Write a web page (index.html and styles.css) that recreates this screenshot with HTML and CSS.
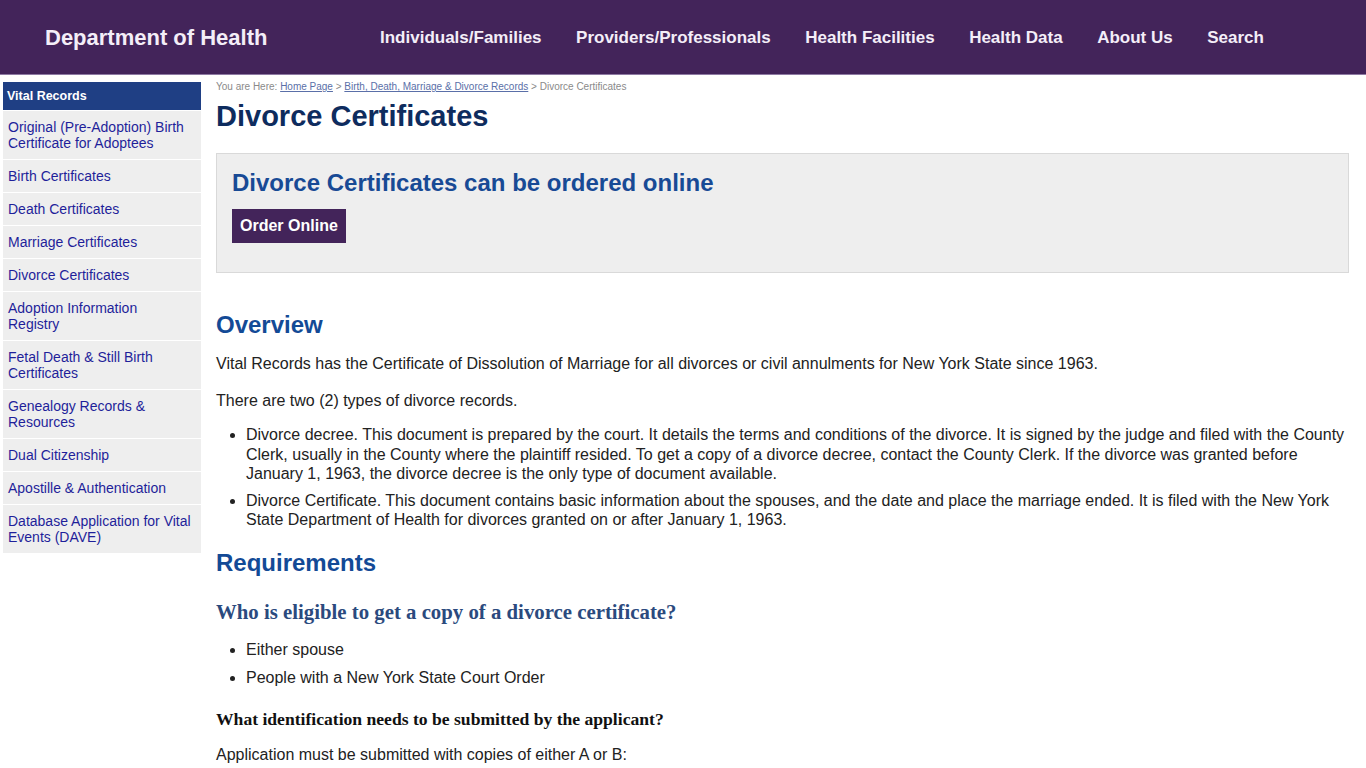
FILE: index.html
```html
<!DOCTYPE html>
<html lang="en">
<head>
<meta charset="utf-8">
<title>Divorce Certificates</title>
<link rel="stylesheet" href="styles.css">
</head>
<body>
<header class="topbar">
  <div class="brand">Department of Health</div>
  <nav class="mainnav">
    <a href="#">Individuals/Families</a>
    <a href="#">Providers/Professionals</a>
    <a href="#">Health Facilities</a>
    <a href="#">Health Data</a>
    <a href="#">About Us</a>
    <a href="#">Search</a>
  </nav>
</header>
<div class="page">
  <aside class="sidebar">
    <div class="side-head">Vital Records</div>
    <ul class="side-list">
      <li><a href="#">Original (Pre-Adoption) Birth Certificate for Adoptees</a></li>
      <li><a href="#">Birth Certificates</a></li>
      <li><a href="#">Death Certificates</a></li>
      <li><a href="#">Marriage Certificates</a></li>
      <li><a href="#">Divorce Certificates</a></li>
      <li><a href="#">Adoption Information Registry</a></li>
      <li><a href="#">Fetal Death &amp; Still Birth Certificates</a></li>
      <li><a href="#">Genealogy Records &amp; Resources</a></li>
      <li><a href="#">Dual Citizenship</a></li>
      <li><a href="#">Apostille &amp; Authentication</a></li>
      <li><a href="#">Database Application for Vital Events (DAVE)</a></li>
    </ul>
  </aside>
  <main class="content">
    <div class="crumbs">You are Here: <a href="#">Home Page</a> &gt; <a href="#">Birth, Death, Marriage &amp; Divorce Records</a> &gt; Divorce Certificates</div>
    <h1 class="title">Divorce Certificates</h1>
    <div class="callout">
      <h2 class="callout-head">Divorce Certificates can be ordered online</h2>
      <a class="btn" href="#">Order Online</a>
    </div>
    <h2 class="sec sec-first">Overview</h2>
    <p>Vital Records has the Certificate of Dissolution of Marriage for all divorces or civil annulments for New York State since 1963.</p>
    <p>There are two (2) types of divorce records.</p>
    <ul class="bul">
      <li>Divorce decree. This document is prepared by the court. It details the terms and conditions of the divorce. It is signed by the judge and filed with the County Clerk, usually in the County where the plaintiff resided. To get a copy of a divorce decree, contact the County Clerk. If the divorce was granted before January 1, 1963, the divorce decree is the only type of document available.</li>
      <li>Divorce Certificate. This document contains basic information about the spouses, and the date and place the marriage ended. It is filed with the New York State Department of Health for divorces granted on or after January 1, 1963.</li>
    </ul>
    <h2 class="sec">Requirements</h2>
    <h3 class="q">Who is eligible to get a copy of a divorce certificate?</h3>
    <ul class="bul bul-wide">
      <li>Either spouse</li>
      <li>People with a New York State Court Order</li>
    </ul>
    <h4 class="q2">What identification needs to be submitted by the applicant?</h4>
    <p>Application must be submitted with copies of either A or B:</p>
  </main>
</div>
</body>
</html>
```
FILE: styles.css
```css
html, body {
  margin: 0;
  padding: 0;
  background: #ffffff;
}
body {
  font-family: "Liberation Sans", Arial, sans-serif;
  color: #222222;
}
.topbar {
  height: 72px;
  padding-top: 2px;
  background: #43245a;
  border-bottom: 1px solid #8e7aa3;
  display: flex;
  align-items: center;
  padding-left: 45px;
  box-sizing: content-box;
}
.brand {
  font-size: 22px;
  font-weight: bold;
  color: #f4eef8;
  width: 335px;
}
.mainnav {
  display: flex;
  gap: 34.5px;
}
.mainnav a {
  color: #f4eef8;
  font-size: 17px;
  font-weight: bold;
  text-decoration: none;
}
.page {
  display: flex;
  align-items: flex-start;
  padding: 6px 17px 0 3px;
}
.sidebar {
  width: 198px;
  flex: none;
}
.side-head {
  background: #1f3f84;
  color: #ffffff;
  font-weight: bold;
  font-size: 12.5px;
  height: 28px;
  line-height: 28px;
  padding-left: 4px;
  margin-top: 1px;
  border-bottom: 1px solid #ffffff;
}
.side-list {
  list-style: none;
  margin: 0;
  padding: 0;
}
.side-list li {
  background: #eeeeee;
  padding: 8px 9px 8px 5px;
  line-height: 16px;
  font-size: 14px;
  border-bottom: 1px solid #ffffff;
}
.side-list a {
  color: #1f1f9a;
  text-decoration: none;
}
.content {
  flex: 1;
  margin-left: 15px;
  margin-top: 1px;
  min-width: 0;
}
.crumbs {
  font-size: 10px;
  color: #8a8a8a;
  line-height: 10px;
  margin-top: 0;
}
.crumbs a {
  color: #5a6fa8;
}
.title {
  font-size: 29px;
  font-weight: bold;
  color: #0e2c5e;
  line-height: 33px;
  margin: 8px 0 20px;
}
.callout {
  background: #eeeeee;
  border: 1px solid #d9d9d9;
  padding: 15px 15px 29px;
}
.callout-head {
  font-size: 24px;
  color: #184a95;
  line-height: 28px;
  margin: 0 0 12px;
}
.btn {
  display: inline-block;
  background: #43245a;
  color: #ffffff;
  font-weight: bold;
  font-size: 16px;
  line-height: 18px;
  padding: 8px 8px;
  text-decoration: none;
}
.sec {
  font-size: 24px;
  color: #134a96;
  line-height: 28px;
  margin: 19px 0 14px;
}
.sec-first {
  margin-top: 38px;
}
.content p {
  font-size: 16px;
  line-height: 21px;
  margin: 0 0 16px;
}
.bul {
  margin: -2px 0 0;
  padding-left: 30px;
  font-size: 16px;
  line-height: 19.5px;
}
.bul li {
  margin-bottom: 7px;
}
.bul-wide li {
  margin-bottom: 8.5px;
}
.q {
  font-family: "Liberation Serif", "Times New Roman", serif;
  font-size: 20.8px;
  font-weight: bold;
  color: #2b4a7e;
  line-height: 23px;
  margin: 23px 0 19px;
}
.q2 {
  font-family: "Liberation Serif", "Times New Roman", serif;
  font-size: 17.6px;
  font-weight: bold;
  color: #111111;
  line-height: 18px;
  margin: 23px 0 16px;
}
```
